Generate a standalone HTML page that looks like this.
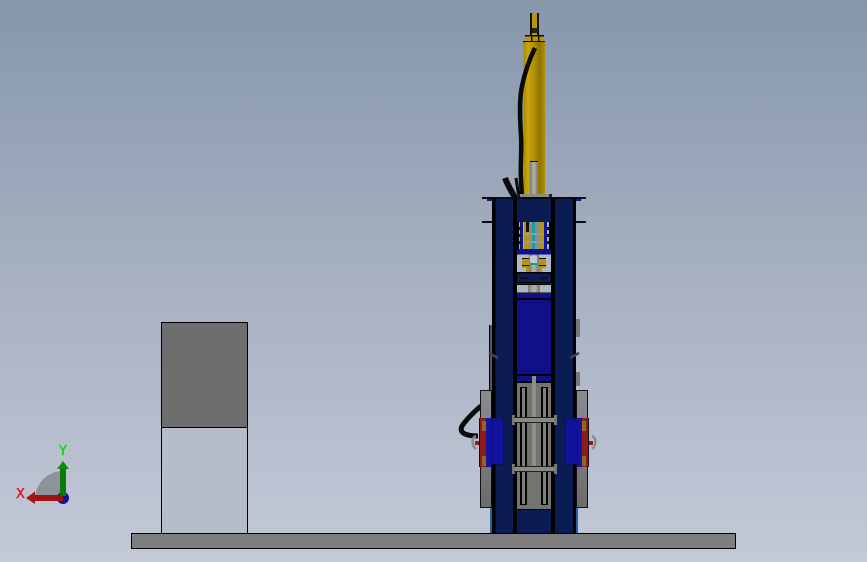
<!DOCTYPE html>
<html><head><meta charset="utf-8"><style>
html,body{margin:0;padding:0;width:867px;height:562px;overflow:hidden;background:#aab4c2}
svg{display:block}
text{font-family:"DejaVu Sans","Liberation Sans",sans-serif}
</style></head><body>
<svg width="867" height="562" viewBox="0 0 867 562" xmlns="http://www.w3.org/2000/svg" shape-rendering="crispEdges">
<defs>
<linearGradient id="bg" x1="0" y1="0" x2="0" y2="1"><stop offset="0" stop-color="#8696ab"/><stop offset=".5" stop-color="#a7b1c2"/><stop offset="1" stop-color="#c4c9d7"/></linearGradient>
<linearGradient id="cyl" x1="0" y1="0" x2="1" y2="0"><stop offset="0" stop-color="#a98a00"/><stop offset=".2" stop-color="#c9a40c"/><stop offset=".5" stop-color="#b08f05"/><stop offset=".75" stop-color="#8f7400"/><stop offset="1" stop-color="#b09006"/></linearGradient>
<linearGradient id="rod" x1="0" y1="0" x2="1" y2="0"><stop offset="0" stop-color="#7a7a74"/><stop offset=".5" stop-color="#b5b5ae"/><stop offset="1" stop-color="#77776f"/></linearGradient>
<linearGradient id="sb" x1="0" y1="0" x2="0" y2="1"><stop offset="0" stop-color="#8a8c94"/><stop offset="1" stop-color="#6c6c68"/></linearGradient>
</defs>
<rect width="867" height="562" fill="url(#bg)"/>

<!-- left box -->
<rect x="161.5" y="322.5" width="86" height="211" fill="#b6bcc8" stroke="#000" stroke-width="1"/>
<rect x="161.5" y="322.5" width="86" height="105" fill="#6e6e6e" stroke="#000" stroke-width="1"/>

<!-- cylinder -->
<rect x="530" y="13" width="9" height="22" fill="#b8960a"/>
<rect x="530" y="13" width="2" height="24" fill="#111"/>
<rect x="537" y="13" width="2" height="24" fill="#111"/>
<rect x="532" y="28" width="6" height="5" fill="#222"/>
<rect x="525" y="35" width="19" height="7" fill="#b8960a"/>
<rect x="525" y="35" width="19" height="1.5" fill="#111"/>
<rect x="523" y="41" width="22" height="1.5" fill="#111"/>
<rect x="531" y="35" width="1.5" height="7" fill="#111"/>
<rect x="538" y="35" width="1.5" height="7" fill="#111"/>
<rect x="523.5" y="42" width="21.5" height="156" fill="url(#cyl)"/>
<rect x="530" y="161" width="8" height="37" fill="url(#rod)"/>
<rect x="530" y="161" width="8" height="1" fill="#111"/>

<!-- hoses -->
<g fill="none" stroke="#0a0a0a" shape-rendering="auto">
<path d="M535 48C530 58 525 72 522 86C519 100 520 120 521 136C522 150 520 165 521 180L522 198" stroke-width="4.500"/>
<path d="M505 178C508 186 512 192 515 198" stroke-width="6"/>
<path d="M516 178L519 198" stroke-width="3"/>
<path d="M481 406C474 412 466 420 462 426C459 432 464 436 478 436" stroke-width="5"/>
</g>

<!-- top fittings -->
<rect x="518" y="194" width="32" height="4" fill="#8c8c86"/>
<rect x="517" y="194" width="3" height="4" fill="#222"/>
<rect x="549" y="194" width="3" height="4" fill="#222"/>

<!-- frame -->
<rect x="492" y="198" width="84" height="335" fill="#000"/>
<rect x="495.500" y="199" width="17.500" height="334" fill="#0a1c52"/>
<rect x="555" y="199" width="18" height="334" fill="#0a1c52"/>
<rect x="482" y="197" width="104" height="2" fill="#0a0a1a"/>
<rect x="482" y="221" width="10" height="2" fill="#0a0a1a"/>
<rect x="576" y="221" width="10" height="2" fill="#0a0a1a"/>
<rect x="487" y="199" width="5" height="2" fill="#14148a"/>
<rect x="576" y="199" width="5" height="2" fill="#14148a"/>

<!-- centre column -->
<rect x="517" y="199" width="34" height="23" fill="#0a1c52"/>
<rect x="517" y="222" width="34" height="27" fill="#a9b1bd"/>
<rect x="524" y="222" width="20" height="27" fill="#b8960a"/>
<rect x="520" y="222" width="3" height="27" fill="#14149a"/>
<rect x="544" y="222" width="3" height="27" fill="#14149a"/>
<rect x="517" y="222" width="2" height="27" fill="#000"/>
<rect x="549" y="222" width="2" height="27" fill="#000"/>
<rect x="529" y="222" width="10" height="27" fill="#8c8c88"/>
<rect x="532" y="222" width="3" height="27" fill="#18a0a0"/>
<rect x="524" y="233" width="20" height="2" fill="#9a9a94"/>
<rect x="524" y="241" width="20" height="2" fill="#9a9a94"/>
<rect x="526" y="222" width="3" height="10" fill="#111"/>
<rect x="519" y="227" width="2" height="3" fill="#111"/>
<rect x="519" y="234" width="2" height="3" fill="#111"/>
<rect x="519" y="241" width="2" height="3" fill="#111"/>
<rect x="547" y="227" width="2" height="3" fill="#111"/>
<rect x="547" y="234" width="2" height="3" fill="#111"/>
<rect x="547" y="241" width="2" height="3" fill="#111"/>
<rect x="517" y="249" width="34" height="5.500" fill="#10108a"/>
<rect x="517" y="254.500" width="34" height="18" fill="#b2b9c5"/>
<rect x="522" y="258" width="24" height="10" fill="#b8960a"/>
<rect x="526" y="268" width="16" height="4" fill="#b8960a"/>
<rect x="522" y="258" width="24" height="1" fill="#111"/>
<rect x="522" y="265" width="24" height="1" fill="#111"/>
<rect x="529" y="254.500" width="10" height="18" fill="url(#rod)"/>
<rect x="530" y="256" width="7" height="7" fill="#c8c8c8"/>
<rect x="530" y="263" width="7" height="2" fill="#159a9a"/>
<rect x="517" y="272" width="34" height="12" fill="#0a1c52"/>
<rect x="517" y="272" width="34" height="1.500" fill="#000"/>
<rect x="517" y="282" width="34" height="1" fill="#000"/>
<rect x="520" y="277" width="8" height="2" fill="#111"/>
<rect x="540" y="277" width="8" height="2" fill="#111"/>
<rect x="517" y="285" width="34" height="7.500" fill="#aeb6c2"/>
<rect x="528" y="285" width="12" height="7.500" fill="url(#rod)"/>
<rect x="517" y="293" width="34" height="5" fill="#10108a"/>
<rect x="517" y="298" width="34" height="2" fill="#000"/>
<rect x="517" y="300" width="34" height="74" fill="#10108a"/>
<rect x="517" y="374" width="34" height="2" fill="#000"/>
<rect x="517" y="376" width="34" height="5" fill="#10108a"/>
<rect x="517" y="381" width="34" height="2" fill="#000"/>
<rect x="517" y="383" width="34" height="126" fill="#74746f"/>
<rect x="520" y="387" width="7" height="118" fill="#000"/>
<rect x="522" y="388" width="3" height="116" fill="#80807b"/>
<rect x="541" y="387" width="7" height="118" fill="#000"/>
<rect x="543" y="388" width="3" height="116" fill="#80807b"/>
<rect x="532" y="376" width="4" height="95" fill="#8f8f8a"/>
<rect x="512" y="415" width="3" height="10" fill="#777"/>
<rect x="554" y="415" width="3" height="10" fill="#777"/>
<rect x="514" y="418" width="40" height="4" fill="#8a8a85"/>
<rect x="514" y="417" width="40" height="1" fill="#222"/>
<rect x="514" y="422" width="40" height="1" fill="#222"/>
<rect x="512" y="464" width="3" height="10" fill="#777"/>
<rect x="554" y="464" width="3" height="10" fill="#777"/>
<rect x="514" y="467" width="40" height="4" fill="#8a8a85"/>
<rect x="514" y="466" width="40" height="1" fill="#222"/>
<rect x="514" y="471" width="40" height="1" fill="#222"/>
<rect x="517" y="509" width="34" height="1" fill="#000"/>
<rect x="517" y="510" width="34" height="23" fill="#0a1c52"/>

<!-- upper side brackets -->
<rect x="489" y="325" width="3" height="65" fill="#55585e"/>
<rect x="489" y="325" width="1" height="65" fill="#000"/>
<rect x="576" y="319" width="4" height="18" fill="#77777a"/>
<rect x="576" y="372" width="4" height="14" fill="#77777a"/>
<path d="M489 353L498 358" stroke="#444" stroke-width="2.500" shape-rendering="auto"/>
<path d="M579 353L570 358" stroke="#444" stroke-width="2.500" shape-rendering="auto"/>

<!-- side blocks left -->
<rect x="480.500" y="390.500" width="11" height="117" fill="url(#sb)" stroke="#111" stroke-width="1"/>
<rect x="479" y="418" width="7" height="49" fill="#8e1c1c"/>
<rect x="482" y="421" width="4" height="10" fill="#8f6a1c"/>
<rect x="482" y="456" width="4" height="10" fill="#8f6a1c"/>
<rect x="479" y="418" width="1" height="49" fill="#111"/>
<rect x="486" y="418" width="5" height="49" fill="#1414a0"/>
<rect x="491" y="418" width="12" height="46" fill="#12129a" stroke="#0a0a40" stroke-width=".5"/>
<rect x="475" y="441" width="4" height="4" fill="#8e1c1c"/>
<path d="M476 436C471 438 472 446 476 449" fill="none" stroke="#8a8a8a" stroke-width="2.500" shape-rendering="auto"/>
<!-- side blocks right -->
<rect x="576.500" y="390.500" width="11" height="117" fill="url(#sb)" stroke="#111" stroke-width="1"/>
<rect x="582" y="418" width="7" height="49" fill="#8e1c1c"/>
<rect x="582" y="421" width="4" height="10" fill="#8f6a1c"/>
<rect x="582" y="456" width="4" height="10" fill="#8f6a1c"/>
<rect x="588" y="418" width="1" height="49" fill="#111"/>
<rect x="577" y="418" width="5" height="49" fill="#1414a0"/>
<rect x="565" y="418" width="12" height="46" fill="#12129a" stroke="#0a0a40" stroke-width=".5"/>
<rect x="589" y="441" width="4" height="4" fill="#8e1c1c"/>
<path d="M592 436C597 438 596 446 592 449" fill="none" stroke="#8a8a8a" stroke-width="2.500" shape-rendering="auto"/>
<!-- feet -->
<rect x="490" y="508" width="2" height="25" fill="#2a5f9e"/>
<rect x="576" y="508" width="2" height="25" fill="#2a5f9e"/>

<!-- base -->
<rect x="131.500" y="533.500" width="604" height="15" fill="#7e7e7e" stroke="#000" stroke-width="1"/>

<!-- triad -->
<g shape-rendering="auto">
<path d="M63 498L35 498A28 28 0 0 1 63 471Z" fill="#8e929c"/>
<circle cx="63" cy="498" r="6" fill="#12129a"/>
<rect x="60" y="469" width="6" height="27" fill="#0b7a0b"/>
<path d="M57 469L63 461L69 469Z" fill="#0e8a0e"/>
<rect x="35" y="495" width="28" height="6" fill="#9c1414"/>
<path d="M35 491.500L26 498L35 504Z" fill="#a81414"/>
</g>
<text x="16" y="498" font-size="13" fill="#ff0000" stroke="#ff0000" stroke-width=".3">X</text>
<text x="59" y="455" font-size="13" fill="#00e000" stroke="#00e000" stroke-width=".3">Y</text>
</svg>
</body></html>
